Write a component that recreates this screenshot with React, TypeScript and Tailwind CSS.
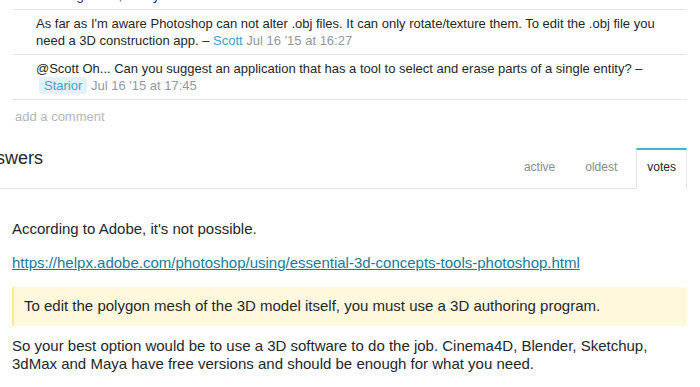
import React from 'react'

type Comment = {
  text: string
  user?: string
  owner?: boolean
  date?: string
}

const comments: Comment[] = [
  {
    text: 'Then I gave in, totally.',
  },
  {
    text: "As far as I'm aware Photoshop can not alter .obj files. It can only rotate/texture them. To edit the .obj file you need a 3D construction app.",
    user: 'Scott',
    date: "Jul 16 '15 at 16:27",
  },
  {
    text: '@Scott Oh... Can you suggest an application that has a tool to select and erase parts of a single entity?',
    user: 'Starior',
    owner: true,
    date: "Jul 16 '15 at 17:45",
  },
]

function CommentRow({ c, first }: { c: Comment; first: boolean }) {
  return (
    <li className={`border-b border-[#e4e6e8] py-[5px] pl-[24px] pr-[10px] text-[13px] leading-[17px] text-[#242729] ${first ? '-mt-[18px]' : ''}`}>
      {c.text}
      {c.user && (
        <>
          {' – '}
          {c.owner ? (
            <span className="ml-[3px] rounded-[3px] bg-[#e3f2f7] px-[5px] py-px text-[#3ea2c9]">{c.user}</span>
          ) : (
            <span className="text-[#3ea2c9]">{c.user}</span>
          )}{' '}
          <span className="text-[#9199a1]">{c.date}</span>
        </>
      )}
    </li>
  )
}

export default function App() {
  const tabs = ['active', 'oldest', 'votes']
  return (
    <div className="h-[387px] w-[700px] overflow-hidden bg-white font-['Liberation_Sans',Arial,sans-serif] text-[#242729]">
      <div className="ml-[12px] w-[675px]">
        <ul>
          {comments.map((c, i) => (
            <CommentRow key={i} c={c} first={i === 0} />
          ))}
        </ul>
        <div className="h-[46px] pl-[3px] pt-[8px] text-[13px] leading-[17px] text-[#b3b7bb]">add a comment</div>
      </div>

      <div className="flex w-[687px] items-end justify-between border-b border-[#e4e6e8]">
        <h2 className="-ml-[40px] mb-[17px] whitespace-nowrap text-[18px] leading-[25px] font-normal text-[#242729]">2 Answers</h2>
        <div className="flex gap-[8px]">
          {tabs.map((t) => (
            <div
              key={t}
              className={
                t === 'votes'
                  ? '-mb-px border-x border-t-2 border-x-[#e4e6e8] border-t-[#37b8cf] bg-white px-[10px] pb-[14px] pt-[9px] text-[12px] leading-[16px] text-[#242729]'
                  : 'border-x border-t-2 border-transparent px-[10px] pb-[13px] pt-[9px] text-[12px] leading-[16px] text-[#858c93]'
              }
            >
              {t}
            </div>
          ))}
        </div>
      </div>

      <div className="ml-[12px] w-[675px] pt-[31px] text-[15px] leading-[18.5px] text-[#242729]">
        <p className="mb-[15px]">According to Adobe, it's not possible.</p>
        <p className="mb-[15px]">
          <a className="text-[#1a7a99] underline" href="#">
            https://helpx.adobe.com/photoshop/using/essential-3d-concepts-tools-photoshop.html
          </a>
        </p>
        <blockquote className="mb-[11px] border-l-2 border-[#ffeb8e] bg-[#fff8dc] py-[10px] pl-[10px]">
          <p>To edit the polygon mesh of the 3D model itself, you must use a 3D authoring program.</p>
        </blockquote>
        <p className="pr-[10px]">
          So your best option would be to use a 3D software to do the job. Cinema4D, Blender, Sketchup, 3dMax and Maya have free versions and should be enough for what you need.
        </p>
      </div>
    </div>
  )
}
